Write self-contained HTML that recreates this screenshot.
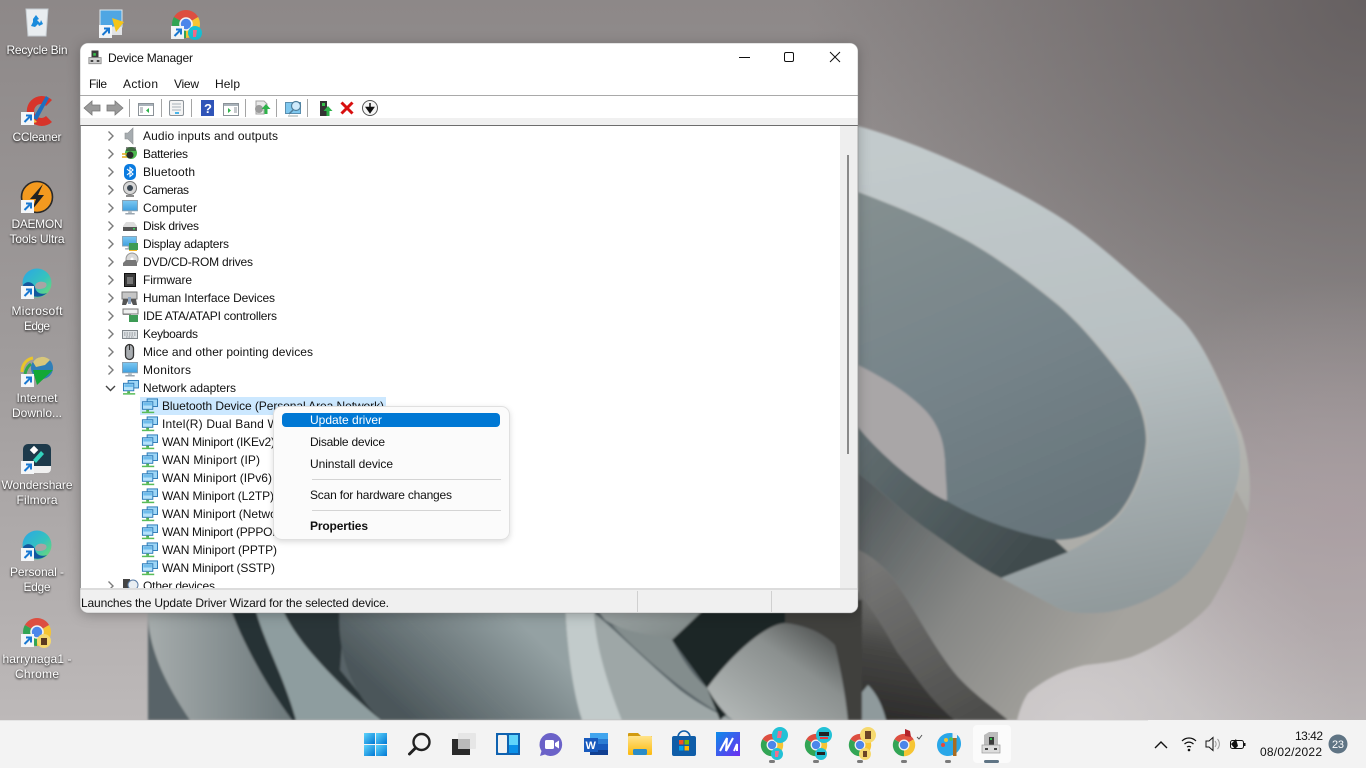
<!DOCTYPE html>
<html lang="en"><head><meta charset="utf-8"><title>Device Manager</title>
<style>
html,body{margin:0;padding:0;width:1366px;height:768px;overflow:hidden;background:#999}
svg{display:block;position:absolute;left:0;top:0}
text{font-family:"Liberation Sans",sans-serif;font-size:12px;fill:#111}
.d text{fill:#fff;text-anchor:middle}
.d{filter:drop-shadow(0 1px 1px #000)}
</style></head><body>
<svg width="1366" height="768" viewBox="0 0 1366 768" xmlns="http://www.w3.org/2000/svg">
<defs>
<linearGradient id="bgl" gradientUnits="userSpaceOnUse" x1="0" y1="0" x2="0" y2="720"><stop offset="0" stop-color="#8d8888"/><stop offset=".5" stop-color="#a09c9c"/><stop offset="1" stop-color="#bdb9b9"/></linearGradient>
<radialGradient id="dark" gradientUnits="userSpaceOnUse" cx="1366" cy="0" r="560"><stop offset="0" stop-color="#5f595a" stop-opacity=".85"/><stop offset="1" stop-color="#5f595a" stop-opacity="0"/></radialGradient>
<radialGradient id="light" gradientUnits="userSpaceOnUse" cx="1080" cy="730" r="270"><stop offset="0" stop-color="#d2cecf" stop-opacity=".9"/><stop offset="1" stop-color="#d2cecf" stop-opacity="0"/></radialGradient>
<radialGradient id="pink" gradientUnits="userSpaceOnUse" cx="1340" cy="520" r="240"><stop offset="0" stop-color="#ab9da2" stop-opacity=".75"/><stop offset="1" stop-color="#ab9da2" stop-opacity="0"/></radialGradient>
<linearGradient id="sil" gradientUnits="userSpaceOnUse" x1="1000" y1="130" x2="1100" y2="680"><stop offset="0" stop-color="#c3cacc"/><stop offset=".6" stop-color="#b5b6b2"/><stop offset="1" stop-color="#a19f9a"/></linearGradient>
<linearGradient id="lip" gradientUnits="userSpaceOnUse" x1="1000" y1="130" x2="1090" y2="610"><stop offset="0" stop-color="#c2cacc"/><stop offset=".5" stop-color="#b8c0c2"/><stop offset="1" stop-color="#919a9c"/></linearGradient>
<linearGradient id="bowl" gradientUnits="userSpaceOnUse" x1="900" y1="190" x2="1050" y2="540"><stop offset="0" stop-color="#848f90"/><stop offset=".5" stop-color="#76848a"/><stop offset="1" stop-color="#66747a"/></linearGradient>
<linearGradient id="band" gradientUnits="userSpaceOnUse" x1="860" y1="440" x2="1010" y2="570"><stop offset="0" stop-color="#616d70"/><stop offset="1" stop-color="#414c4e"/></linearGradient>
<linearGradient id="flow" gradientUnits="userSpaceOnUse" x1="870" y1="490" x2="1100" y2="650"><stop offset="0" stop-color="#555c5e"/><stop offset=".5" stop-color="#878886"/><stop offset="1" stop-color="#a5a39e"/></linearGradient>
<linearGradient id="f1" gradientUnits="userSpaceOnUse" x1="870" y1="560" x2="960" y2="720"><stop offset="0" stop-color="#777776"/><stop offset="1" stop-color="#4e4e4c"/></linearGradient>
<linearGradient id="f2" gradientUnits="userSpaceOnUse" x1="880" y1="600" x2="860" y2="720"><stop offset="0" stop-color="#6e6e6c"/><stop offset=".4" stop-color="#464644"/><stop offset="1" stop-color="#2b2a29"/></linearGradient>
<linearGradient id="big" gradientUnits="userSpaceOnUse" x1="410" y1="720" x2="510" y2="613"><stop offset="0" stop-color="#4b565a"/><stop offset="1" stop-color="#94a1a3"/></linearGradient>
<linearGradient id="sA" x1="0" y1="0" x2="1" y2="0"><stop offset="0" stop-color="#a9afaf"/><stop offset="1" stop-color="#6b777a"/></linearGradient>
<linearGradient id="sJ" x1="0" y1="1" x2="1" y2="0"><stop offset="0" stop-color="#b7bcbb"/><stop offset=".6" stop-color="#8b908f"/><stop offset="1" stop-color="#3c3e3d"/></linearGradient>
<linearGradient id="sH" x1="0" y1="0" x2="1" y2="1"><stop offset="0" stop-color="#a9b1b1"/><stop offset="1" stop-color="#77807f"/></linearGradient>
<linearGradient id="win" x1="0" y1="0" x2="1" y2="1"><stop offset="0" stop-color="#5fd4fb"/><stop offset="1" stop-color="#0078d4"/></linearGradient>
<linearGradient id="scr" x1="0" y1="0" x2="0" y2="1"><stop offset="0" stop-color="#7cc8f2"/><stop offset="1" stop-color="#3f9fdf"/></linearGradient>
<linearGradient id="folder" x1="0" y1="0" x2="0" y2="1"><stop offset="0" stop-color="#ffe38a"/><stop offset="1" stop-color="#fcb90c"/></linearGradient>
<linearGradient id="ma" x1="0" y1="0" x2="1" y2="1"><stop offset="0" stop-color="#0c8ce9"/><stop offset="1" stop-color="#6e2df0"/></linearGradient>
<linearGradient id="edge" x1="0" y1="0" x2="1" y2="1"><stop offset="0" stop-color="#2aa6e6"/><stop offset=".55" stop-color="#35c3bd"/><stop offset="1" stop-color="#7bdc66"/></linearGradient>
<filter id="soft" x="-5%" y="-5%" width="110%" height="110%"><feGaussianBlur stdDeviation="1.1"/></filter>
<filter id="menuS" x="-15%" y="-15%" width="130%" height="130%"><feDropShadow dx="0" dy="2" stdDeviation="3" flood-color="#000" flood-opacity=".14"/></filter>
<clipPath id="treeClip"><rect x="81" y="126" width="759" height="462"/></clipPath>
<clipPath id="winClip"><rect x="80" y="43" width="778" height="570" rx="8"/></clipPath>

<symbol id="chev" viewBox="0 0 8 12" overflow="visible"><path d="M1.5 1.5L6 6 1.5 10.5" fill="none" stroke="#7b7b7b" stroke-width="1.4"/></symbol>
<symbol id="net" viewBox="0 0 18 16"><rect x="6.5" y=".5" width="11" height="8" fill="#9ed6f6" stroke="#2a78b6"/><rect x="1.5" y="3.5" width="11" height="8" fill="#b5e2fb" stroke="#2a78b6"/><rect x="2.5" y="4.5" width="9" height="3" fill="#6fbdec"/><rect x="5.5" y="12" width="3" height="2" fill="#4eb04e"/><rect x="1" y="14" width="13" height="1.6" fill="#58bc58"/></symbol>
<symbol id="mon" viewBox="0 0 17 16"><rect x=".5" y=".5" width="16" height="11" fill="url(#scr)" stroke="#8aa0b0"/><rect x="6.5" y="12" width="4" height="2" fill="#b4bdc4"/><rect x="3.5" y="14" width="10" height="1.4" fill="#8d9aa5"/></symbol>
<symbol id="chrome" viewBox="0 0 30 30"><path d="M15 15L27.1 8A14 14 0 0 0 2.9 8Z" fill="#dd4e40"/><path d="M15 15L15 29A14 14 0 0 0 27.1 8Z" fill="#f6c533"/><path d="M15 15L2.9 8A14 14 0 0 0 15 29Z" fill="#32a555"/><circle cx="15" cy="15" r="6.8" fill="#f2f2f2"/><circle cx="15" cy="15" r="5.2" fill="#4c86ea"/></symbol>
<symbol id="edgei" viewBox="0 0 30 30"><circle cx="15" cy="15" r="14.5" fill="url(#edge)"/><path d="M1 17C3 27 16 33 25 25 19 27 14 25 13 19 11 14 5 12 1 17Z" fill="#14569e"/><path d="M13 19C13 14 19 12 24 15 26 19 22 21 17 21 15 21 13 20 13 19Z" fill="#a8a4a4"/></symbol>
<symbol id="sc" viewBox="0 0 13 13"><rect width="13" height="13" fill="#f4f6f8"/><path d="M3.5 10L9 4.5M5 3.5h5v5" fill="none" stroke="#1878d2" stroke-width="2"/></symbol>
<symbol id="dev" viewBox="0 0 16 16"><path d="M4 0h8v8H4z" fill="#3b3b3b"/><rect x="6" y="3" width="3" height="3" fill="#35c04a"/><path d="M1 8h14v7H1z" fill="#cfcfcf" stroke="#8c8c8c"/><rect x="3" y="11" width="3" height="2" fill="#333"/><rect x="10" y="11" width="3" height="2" fill="#333"/></symbol>
</defs>

<!-- wallpaper -->
<g>
<rect width="1366" height="768" fill="url(#bgl)"/>
<rect width="1366" height="768" fill="url(#dark)"/>
<rect width="1366" height="768" fill="url(#light)"/>
<rect width="1366" height="768" fill="url(#pink)"/>
<g filter="url(#soft)">
<path d="M148 100L858 126C930 146 1010 186 1058 216 1100 242 1158 298 1180 318 1206 344 1224 392 1241 432 1250 460 1252 490 1248 513 1244 540 1235 563 1211 603 1196 622 1160 646 1131 657 1110 663 1100 663 1085 665 1062 670 1044 680 1028 693 1022 702 1019 712 1017 720L190 720C168 688 148 650 148 613Z" fill="url(#sil)"/>
<path d="M858 128C930 146 1010 186 1058 216 1100 242 1158 298 1180 318 1206 344 1222 392 1236 432 1243 455 1240 475 1235 490 1228 515 1208 550 1191 570 1174 590 1130 612 1098 613 1080 614 1066 612 1058 608L1001 578 1065 553C1080 546 1100 535 1118 517 1133 500 1146 470 1148 441 1148 420 1140 395 1125 376 1100 346 1080 322 1058 303 1030 280 990 250 958 234 925 216 890 202 858 190Z" fill="url(#lip)"/>
<path d="M858 192C890 204 925 218 958 236 990 252 1030 282 1058 305 1080 324 1100 348 1123 378 1138 397 1146 420 1146 441 1144 470 1131 500 1116 516 1100 532 1080 540 1055 540 1030 538 1010 532 991 523L946 503 945 459 931 418 901 395 858 365Z" fill="url(#bowl)"/>
<path d="M858 365C880 376 905 390 925 410 940 426 945 445 945 465 946 480 947 490 947 501 925 492 880 455 858 427Z" fill="#a9a6a7"/>
<path d="M858 427C880 455 925 492 947 501 970 515 1010 532 1055 540L1068 552 1001 578C975 565 950 545 925 528 900 510 880 490 858 473Z" fill="url(#band)"/>
<path d="M858 473C880 490 900 510 925 528 950 545 975 565 1001 578L1058 608C1066 612 1080 614 1098 613 1130 612 1174 590 1191 570 1208 550 1228 515 1236 490L1248 513C1244 540 1235 563 1211 603 1196 622 1160 646 1131 657 1110 663 1100 663 1085 665 1062 670 1044 680 1028 693 1022 702 1019 712 1017 720L1008 720C990 705 975 695 958 677 935 650 915 610 901 590 890 572 875 558 858 550Z" fill="url(#flow)"/>
<path d="M858 550C875 558 890 572 901 590 915 610 935 650 958 677 975 695 990 705 1008 720L955 720C930 700 915 675 898 653 890 640 875 610 858 592Z" fill="url(#f1)"/>
<path d="M858 592C875 610 890 640 898 653 915 675 930 700 955 720L780 720 780 590Z" fill="url(#f2)"/>
<path d="M868 685C878 695 883 708 886 720H858V697Z" fill="#8f9a9c"/>
<!-- lower fan below the window -->
<rect x="148" y="600" width="640" height="120" fill="#596467"/>
<path d="M140 600H230C238 630 262 685 294 720H190C168 688 148 650 148 613Z" fill="url(#sA)"/>
<path d="M228 600H258C262 630 280 670 296 720H292C266 685 238 635 228 600Z" fill="#263034"/>
<path d="M253 600H282C288 630 330 680 381 720H296C286 680 262 640 253 600Z" fill="#8e9d9f"/>
<path d="M279 600H345L340 670 381 720C335 680 292 640 279 600Z" fill="#2a3437"/>
<path d="M340 600H565C566 640 572 690 582 720H381C355 695 335 660 340 600Z" fill="url(#big)"/>
<path d="M565 600H594C596 650 610 690 622 720H582C572 690 566 640 565 600Z" fill="#c2cbcb"/>
<path d="M590 600H714L707 640 672 640C650 640 625 632 605 620Z" fill="url(#sH)"/>
<path d="M594 613C610 625 650 665 680 690 700 705 720 715 733 720H622C610 690 596 650 594 613Z" fill="#9ea7a7"/>
<path d="M612 625C640 635 660 636 672 640 682 660 695 678 707 688L733 720C700 705 650 665 612 625Z" fill="#838d8d"/>
<path d="M672 640L714 600H790V660L720 720 707 688Z" fill="#1d2526"/>
<path d="M707 688C735 650 768 623 786 623 805 625 822 632 835 645 842 675 846 700 848 720H733C722 712 714 700 707 688Z" fill="url(#sJ)"/>
<path d="M785 600H862V720H848C846 700 842 672 835 645 822 632 805 625 785 623Z" fill="#3f3f3d"/>
</g>
</g>

<!-- desktop icons -->
<g id="desktop">
<path d="M26 9h22l-2 27H28Z" fill="#e9edf0" stroke="#c5ccd1"/><path d="M33 19l3-4 3 4-2 1 3 3 1-3 2 4-4 2-1-2-3 3-4-1 2-4Z" fill="#1a8bdc"/>
<rect x="100" y="10" width="22" height="17" fill="#4fa6e3" stroke="#dfe6ea"/><rect x="104" y="27" width="18" height="8" fill="#e2e4e6"/><path d="M112 18l12 4-8 10Z" fill="#f5c518"/><use href="#sc" x="99" y="25" width="13" height="13"/>
<use href="#chrome" x="171" y="9" width="30" height="30"/><use href="#sc" x="171" y="26" width="13" height="13"/><circle cx="195" cy="33" r="7" fill="#17c0d4"/><path d="M193 30h4l-1 7h-3Z" fill="#f06a8a"/>

<path d="M52 100A15 15 0 1 0 52 122L46 116A7 7 0 1 1 46 106Z" fill="#d8342a"/><path d="M33 118L46 96l3 2-12 22Z" fill="#1f6fc0"/><path d="M27 112l10 10-7 2Z" fill="#f2c14a"/><use href="#sc" x="21" y="112" width="13" height="13"/>
<circle cx="37" cy="197" r="15.5" fill="#f49a1f" stroke="#2a2a2a" stroke-width="1.6"/><path d="M43 184L30 199h6l-4 11 12-15h-6Z" fill="#222"/><use href="#sc" x="21" y="200" width="13" height="13"/>
<use href="#edgei" x="21" y="268" width="32" height="30"/><use href="#sc" x="21" y="286" width="13" height="13"/>
<path d="M22 372c0-8 5-13 11-14" stroke="#e9c52a" stroke-width="3" fill="none"/><path d="M25 374c1-5 3-8 6-10" stroke="#2fa84a" stroke-width="3" fill="none"/><circle cx="42" cy="368" r="11" fill="#2f7fb8"/><path d="M33 362a11 11 0 0 1 17-2l-5 5-9 2Z" fill="#d8c77b"/><path d="M33 370h20l-16 15-2-7Z" fill="#14a836"/><use href="#sc" x="21" y="374" width="13" height="13"/>
<rect x="23" y="444" width="28" height="29" rx="5" fill="#1d3a4b"/><path d="M33 460l8-9 3 3-8 9Z" fill="#33d3be"/><rect x="31" y="447" width="6" height="6" fill="#fff" transform="rotate(45 34 450)"/><path d="M27 466h24v3a4 4 0 0 1-4 4H27Z" fill="#f0f0f0"/><use href="#sc" x="21" y="461" width="13" height="13"/>
<use href="#edgei" x="21" y="530" width="32" height="30"/><use href="#sc" x="21" y="548" width="13" height="13"/>
<use href="#chrome" x="22" y="617" width="30" height="30"/><circle cx="44" cy="641" r="7" fill="#f6d96e"/><path d="M41 638h6v7h-6Z" fill="#5b3a21"/><use href="#sc" x="21" y="634" width="13" height="13"/>

<g class="d">
<text x="37" y="54" textLength="61">Recycle Bin</text>
<text x="37" y="141" textLength="49">CCleaner</text>
<text x="37" y="228" textLength="51">DAEMON</text><text x="37" y="243" textLength="55">Tools Ultra</text>
<text x="37" y="315" textLength="51">Microsoft</text><text x="37" y="330" textLength="26">Edge</text>
<text x="37" y="402" textLength="41">Internet</text><text x="37" y="417" textLength="50">Downlo...</text>
<text x="37" y="489" textLength="71">Wondershare</text><text x="37" y="504" textLength="41">Filmora</text>
<text x="37" y="576" textLength="54">Personal -</text><text x="37" y="591" textLength="27">Edge</text>
<text x="37" y="663" textLength="69">harrynaga1 -</text><text x="37" y="678" textLength="44">Chrome</text>
</g>
</g>

<!-- window -->
<g style="filter:drop-shadow(0 2px 6px rgba(0,0,0,.25))"><rect x="80" y="43" width="778" height="570" rx="8" fill="#fff"/></g>
<g clip-path="url(#winClip)">
<use href="#dev" x="88" y="50" width="14" height="15"/>
<text x="108" y="62" textLength="85">Device Manager</text>
<path d="M739 57.500h11" stroke="#111" stroke-width="1"/>
<rect x="784.500" y="52.500" width="9" height="9" rx="1.500" fill="none" stroke="#111"/>
<path d="M830 52l10 10M840 52l-10 10" stroke="#111" stroke-width="1"/>
<text x="89" y="88" textLength="18">File</text><text x="123" y="88" textLength="35">Action</text><text x="174" y="88" textLength="25">View</text><text x="215" y="88" textLength="25">Help</text>
<rect x="80" y="95" width="778" height="1" fill="#a9a9a9"/>
<!-- toolbar -->
<path d="M84 108l8-7v4h8v6h-8v4Z" fill="#9a9a9a" stroke="#777" stroke-width=".8"/>
<path d="M123 108l-8-7v4h-8v6h8v4Z" fill="#9a9a9a" stroke="#777" stroke-width=".8"/>
<g fill="#a5a5a5"><rect x="129" y="99" width="1" height="18"/><rect x="161" y="99" width="1" height="18"/><rect x="191" y="99" width="1" height="18"/><rect x="245" y="99" width="1" height="18"/><rect x="276" y="99" width="1" height="18"/><rect x="307" y="99" width="1" height="18"/></g>
<rect x="138.500" y="103.500" width="15" height="12" fill="#fff" stroke="#8b9298"/><rect x="139" y="104" width="14" height="2" fill="#a9b2ba"/><path d="M149 108v5l-3-2.500Z" fill="#2eb34a"/><path d="M140 108h3M140 110h3M140 112h3" stroke="#8b9298"/>
<rect x="169.500" y="100.500" width="14" height="15" rx="1.500" fill="#f4f4f4" stroke="#8b9298"/><path d="M172 104h9M172 107h9M172 110h9" stroke="#a9b2ba"/><rect x="175" y="112" width="4" height="2" fill="#4ab5ea"/>
<rect x="201" y="100" width="13" height="16" fill="#2f54b8"/><text x="204" y="113" style="font-size:13px;font-weight:bold;fill:#fff">?</text>
<rect x="223.500" y="103.500" width="15" height="12" fill="#fff" stroke="#8b9298"/><rect x="224" y="104" width="14" height="2" fill="#a9b2ba"/><path d="M228 108v5l3-2.500Z" fill="#2eb34a"/><path d="M234 108h3M234 110h3M234 112h3" stroke="#8b9298"/>
<path d="M256 101h8l3 3v5h-3v5h-8Z" fill="#e8e8e8" stroke="#a3a3a3"/><circle cx="259" cy="109" r="4" fill="#9b9b9b"/><path d="M266 104l4.500 5h-3v5h-3v-5h-3Z" fill="#2eb34a"/>
<rect x="285.500" y="102.500" width="15" height="11" fill="#7fc8ef" stroke="#5a8fb0"/><path d="M288 116h10" stroke="#9aa"/><circle cx="296" cy="106" r="4.500" fill="#cfeafb" stroke="#4f7f9c" stroke-width="1.200"/><path d="M293 110l-4 4" stroke="#4f7f9c" stroke-width="1.500"/>
<rect x="320" y="101" width="7" height="15" fill="#333"/><rect x="322" y="103" width="3" height="3" fill="#35c04a"/><path d="M328 106l4.500 5h-3v5h-3v-5h-3Z" fill="#2eb34a"/>
<path d="M341.500 102.500l11 11M352.500 102.500l-11 11" stroke="#d80f0f" stroke-width="3"/>
<circle cx="370" cy="108" r="7.500" fill="#f6f6f6" stroke="#555"/><path d="M370 103v5M366.500 107.500h7L370 112.500Z" stroke="#111" fill="#111" stroke-width="1.500"/>
<rect x="80" y="118" width="778" height="7" fill="#f0f0f0"/>
<rect x="80" y="125" width="778" height="1" fill="#6d6d6d"/>
<rect x="80" y="126" width="1" height="463" fill="#9a9a9a"/>
<rect x="840" y="126" width="18" height="463" fill="#eeeeee"/>
<rect x="847" y="155" width="2" height="299" fill="#8a8a8a"/>
<rect x="857" y="126" width="1" height="463" fill="#dcdcdc"/>

<!-- tree -->
<g clip-path="url(#treeClip)">
<rect x="140" y="397" width="246" height="18" fill="#cce8ff"/>
<use href="#chev" x="107" y="130" width="8" height="12"/><use href="#chev" x="107" y="148" width="8" height="12"/><use href="#chev" x="107" y="166" width="8" height="12"/><use href="#chev" x="107" y="184" width="8" height="12"/><use href="#chev" x="107" y="202" width="8" height="12"/><use href="#chev" x="107" y="220" width="8" height="12"/><use href="#chev" x="107" y="238" width="8" height="12"/><use href="#chev" x="107" y="256" width="8" height="12"/><use href="#chev" x="107" y="274" width="8" height="12"/><use href="#chev" x="107" y="292" width="8" height="12"/><use href="#chev" x="107" y="310" width="8" height="12"/><use href="#chev" x="107" y="328" width="8" height="12"/><use href="#chev" x="107" y="346" width="8" height="12"/><use href="#chev" x="107" y="364" width="8" height="12"/><use href="#chev" x="107" y="580" width="8" height="12"/>
<path d="M106 386l4.500 4.500 4.500-4.500" fill="none" stroke="#444" stroke-width="1.400"/>

<path d="M125 133h3l5-5v16l-5-5h-3Z" fill="#a6acb0" stroke="#8b8f92" stroke-width=".6"/>
<circle cx="131" cy="153" r="6" fill="#4db84f"/><path d="M126 147h10v4h-10Z" fill="#333" opacity=".6"/><path d="M122 154h5M122 157h5" stroke="#e6a91c" stroke-width="1.500"/><circle cx="130" cy="155" r="3.500" fill="#2a2a2a"/>
<rect x="124" y="164" width="12" height="16" rx="5" fill="#0a7be0"/><path d="M127 169l6 5-3 2.500v-9l3 2.500-6 5" fill="none" stroke="#fff" stroke-width="1.100"/>
<circle cx="130" cy="188" r="6.500" fill="#d7d7d7" stroke="#777"/><circle cx="130" cy="188" r="3" fill="#3a4652"/><path d="M126 196h8" stroke="#666" stroke-width="1.500"/>
<use href="#mon" x="122" y="200" width="16" height="15"/>
<path d="M123 226l3-4h8l3 4v4h-14Z" fill="#dcdcdc"/><rect x="123" y="227" width="14" height="4" fill="#555"/><rect x="133" y="228" width="2" height="1.500" fill="#3fd05a"/>
<use href="#mon" x="122" y="236" width="15" height="14"/><rect x="129" y="243" width="9" height="7" fill="#3d9b55"/><rect x="129" y="250" width="8" height="1" fill="#f0b429"/>
<circle cx="132" cy="259" r="6" fill="#d8d8d8" stroke="#999"/><circle cx="132" cy="259" r="1.500" fill="#fff"/><path d="M123 263l3-3h10l1 3v3h-14Z" fill="#777"/>
<rect x="124.500" y="273.500" width="11" height="13" fill="#3c3c3c" stroke="#111"/><rect x="127" y="277" width="6" height="7" fill="#777"/>
<rect x="122" y="292" width="15" height="7" fill="#c6c6c6" stroke="#777"/><path d="M123 299l-1 6h4l2-4h3l2 4h4l-1-6Z" fill="#555"/><rect x="128" y="297" width="3" height="7" fill="#8fa5c0"/>
<path d="M123 309h15v5h-15Z" fill="#eee" stroke="#777"/><rect x="123" y="314" width="8" height="1" fill="#888"/><rect x="129" y="315" width="9" height="7" fill="#3d9b55"/>
<rect x="122.500" y="330.500" width="15" height="8" fill="#dfe3e6" stroke="#80868b"/><path d="M124 333h12M124 335h12M126 337h8" stroke="#8b9197" stroke-dasharray="1.500 1"/>
<rect x="125.500" y="344.500" width="8" height="15" rx="4" fill="#a8acb0" stroke="#333" stroke-width="1.300"/><path d="M129.500 345v5" stroke="#333"/>
<use href="#mon" x="122" y="362" width="16" height="15"/>
<use href="#net" x="122" y="380" width="17" height="15"/>
<rect x="123" y="579" width="7" height="13" fill="#444"/><circle cx="133" cy="585" r="5" fill="#e9eef2" stroke="#5a7ca5"/>

<use href="#net" x="141" y="398" width="17" height="16"/><use href="#net" x="141" y="416" width="17" height="16"/><use href="#net" x="141" y="434" width="17" height="16"/><use href="#net" x="141" y="452" width="17" height="16"/><use href="#net" x="141" y="470" width="17" height="16"/><use href="#net" x="141" y="488" width="17" height="16"/><use href="#net" x="141" y="506" width="17" height="16"/><use href="#net" x="141" y="524" width="17" height="16"/><use href="#net" x="141" y="542" width="17" height="16"/><use href="#net" x="141" y="560" width="17" height="16"/>

<text x="143" y="140" textLength="135">Audio inputs and outputs</text>
<text x="143" y="158" textLength="45">Batteries</text>
<text x="143" y="176" textLength="52">Bluetooth</text>
<text x="143" y="194" textLength="46">Cameras</text>
<text x="143" y="212" textLength="54">Computer</text>
<text x="143" y="230" textLength="56">Disk drives</text>
<text x="143" y="248" textLength="86">Display adapters</text>
<text x="143" y="266" textLength="110">DVD/CD-ROM drives</text>
<text x="143" y="284" textLength="49">Firmware</text>
<text x="143" y="302" textLength="132">Human Interface Devices</text>
<text x="143" y="320" textLength="134">IDE ATA/ATAPI controllers</text>
<text x="143" y="338" textLength="55">Keyboards</text>
<text x="143" y="356" textLength="170">Mice and other pointing devices</text>
<text x="143" y="374" textLength="48">Monitors</text>
<text x="143" y="392" textLength="93">Network adapters</text>
<text x="162" y="410" textLength="222">Bluetooth Device (Personal Area Network)</text>
<text x="162" y="428" textLength="205">Intel(R) Dual Band Wireless-AC 3168</text>
<text x="162" y="446" textLength="113">WAN Miniport (IKEv2)</text>
<text x="162" y="464" textLength="98">WAN Miniport (IP)</text>
<text x="162" y="482" textLength="110">WAN Miniport (IPv6)</text>
<text x="162" y="500" textLength="112">WAN Miniport (L2TP)</text>
<text x="162" y="518" textLength="172">WAN Miniport (Network Monitor)</text>
<text x="162" y="536" textLength="122">WAN Miniport (PPPOE)</text>
<text x="162" y="554" textLength="115">WAN Miniport (PPTP)</text>
<text x="162" y="572" textLength="113">WAN Miniport (SSTP)</text>
<text x="143" y="590" textLength="72">Other devices</text>
</g>

<!-- status bar -->
<rect x="80" y="588" width="778" height="2" fill="#dcdcdc"/>
<rect x="80" y="590" width="778" height="23" fill="#f0f0f0"/>
<rect x="637" y="591" width="1" height="21" fill="#d0d0d0"/><rect x="771" y="591" width="1" height="21" fill="#d0d0d0"/>
<text x="81" y="607" textLength="308">Launches the Update Driver Wizard for the selected device.</text>
</g>
<rect x="80" y="43" width="778" height="570" rx="8" fill="none" stroke="#8a8a8a" stroke-opacity=".45"/>

<!-- context menu -->
<rect x="273.500" y="406.500" width="236" height="133" rx="8" fill="#fbfbfb" stroke="#e0e0e0" filter="url(#menuS)"/>
<rect x="282" y="413" width="218" height="14" rx="4" fill="#0078d4"/>
<text x="310" y="424" textLength="72" style="fill:#fff">Update driver</text>
<text x="310" y="446" textLength="75">Disable device</text>
<text x="310" y="468" textLength="83">Uninstall device</text>
<rect x="312" y="479" width="189" height="1" fill="#d4d4d4"/>
<text x="310" y="499" textLength="142">Scan for hardware changes</text>
<rect x="312" y="510" width="189" height="1" fill="#d4d4d4"/>
<text x="310" y="530" textLength="58" style="font-weight:bold">Properties</text>

<!-- taskbar -->
<rect y="720" width="1366" height="48" fill="#f3f3f3"/>
<rect y="720" width="1148" height="1" fill="#e4e4e4"/>
<g fill="url(#win)"><rect x="364" y="733" width="11" height="11"/><rect x="376" y="733" width="11" height="11"/><rect x="364" y="745" width="11" height="11"/><rect x="376" y="745" width="11" height="11"/></g>
<circle cx="421.500" cy="742" r="8" fill="none" stroke="#222" stroke-width="2.400"/><path d="M415.500 748l-6 6" stroke="#222" stroke-width="3" stroke-linecap="round"/>
<rect x="452" y="739" width="18" height="16" fill="#2a2a2a"/><rect x="458" y="733" width="18" height="16" rx="1" fill="#e6e6e6"/><rect x="458" y="739" width="12" height="10" fill="#b9b9b9"/>
<rect x="496" y="733" width="24" height="22" fill="#0f62b0"/><rect x="498" y="735" width="9" height="18" rx="1" fill="#f2f2f2"/><rect x="509" y="735" width="9" height="10" fill="#5fd4fb"/><rect x="509" y="745" width="9" height="8" fill="#0a90e8"/>
<path d="M551 733a11.500 11.500 0 1 1-6 21.500l-5 1.500 1.500-5A11.500 11.500 0 0 1 551 733Z" fill="#6b62c8"/><rect x="545" y="740" width="9" height="9" rx="1.500" fill="#fff"/><path d="M555 743l4-2.500v8l-4-2.500Z" fill="#fff"/>
<rect x="590" y="733" width="18" height="6" fill="#41a5ee"/><rect x="590" y="739" width="18" height="5" fill="#2b7cd3"/><rect x="590" y="744" width="18" height="6" fill="#185abd"/><rect x="590" y="750" width="18" height="5" fill="#103f91"/><rect x="584" y="738" width="14" height="14" fill="#185abd"/><text x="585.500" y="749" style="font-size:11px;font-weight:bold;fill:#fff">W</text>
<path d="M628 734a1 1 0 0 1 1-1h9l3 3h11v5h-24Z" fill="#d19a10"/><rect x="628" y="736" width="24" height="19" rx="1" fill="url(#folder)"/><rect x="633" y="749" width="14" height="6" rx="1.500" fill="#2a8cc8"/>
<path d="M678 737a6 6 0 0 1 12 0" fill="none" stroke="#0f5da8" stroke-width="1.600"/><rect x="672" y="736" width="24" height="20" rx="2" fill="#0f5da8"/><rect x="679" y="740" width="4.500" height="4.500" fill="#f25022"/><rect x="684.500" y="740" width="4.500" height="4.500" fill="#7fba00"/><rect x="679" y="746" width="4.500" height="4.500" fill="#00a4ef"/><rect x="684.500" y="746" width="4.500" height="4.500" fill="#ffb900"/>
<rect x="716" y="732" width="24" height="24" fill="url(#ma)"/><path d="M720 751l7-13 -1 13 7-13M734 751l3-7 0 7" fill="none" stroke="#fff" stroke-width="2"/>

<use href="#chrome" x="760" y="733" width="24" height="24"/><circle cx="780" cy="735" r="8" fill="#22c1d6"/><path d="M778 731h4l-1 7h-4Z" fill="#ef6f8e"/><circle cx="777" cy="754" r="6" fill="#22c1d6"/><path d="M775 751h4l-1 6h-3Z" fill="#ef6f8e"/>
<use href="#chrome" x="804" y="733" width="24" height="24"/><circle cx="824" cy="735" r="8" fill="#22c1d6"/><path d="M819 732h10v4h-10Z" fill="#222"/><path d="M820 737h8v2h-8Z" fill="#e83a3a"/><circle cx="821" cy="754" r="6" fill="#22c1d6"/><path d="M817 752h8v3h-8Z" fill="#222"/>
<use href="#chrome" x="848" y="733" width="24" height="24"/><circle cx="868" cy="735" r="8" fill="#f6d96e"/><path d="M865 731h6v8h-6Z" fill="#6b4526"/><circle cx="865" cy="754" r="6" fill="#f6d96e"/><path d="M863 751h4v6h-4Z" fill="#6b4526"/>
<use href="#chrome" x="892" y="733" width="24" height="24"/><path d="M905 729l5 2 1 6-6-1Z" fill="#b2232a"/><path d="M917 737l2 2 3-4" stroke="#555" fill="none"/>
<path d="M950 733c8 0 11 5 11 11s-6 12-13 12-11-5-11-11 5-12 13-12Z" fill="#2aa7e8"/><circle cx="943" cy="745" r="2" fill="#e8483a"/><circle cx="946" cy="740" r="2" fill="#f2c233"/><circle cx="951" cy="739" r="1.800" fill="#4fc34f"/><rect x="953" y="738" width="3.500" height="18" fill="#a96c22"/><rect x="952.500" y="733" width="4.500" height="5" fill="#eee"/>
<rect x="973" y="725" width="38" height="38" rx="4" fill="#fbfbfb"/>
<path d="M984 735l5-3h9v14h-14Z" fill="#bcbcbc"/><rect x="989" y="737" width="5" height="8" fill="#3a3a3a"/><rect x="990" y="738" width="2" height="2" fill="#35c04a"/><rect x="982" y="745" width="18" height="8" fill="#dcdcdc" stroke="#9a9a9a" stroke-width=".7"/><rect x="985" y="748" width="3" height="2" fill="#444"/><rect x="994" y="748" width="3" height="2" fill="#444"/>
<g fill="#7a7a7a"><rect x="769" y="760" width="6" height="3" rx="1.500"/><rect x="813" y="760" width="6" height="3" rx="1.500"/><rect x="857" y="760" width="6" height="3" rx="1.500"/><rect x="901" y="760" width="6" height="3" rx="1.500"/><rect x="945" y="760" width="6" height="3" rx="1.500"/></g>
<rect x="984" y="760" width="15" height="3" rx="1.500" fill="#5f7484"/>

<path d="M1155 748l6-6 6 6" fill="none" stroke="#111" stroke-width="1.400"/>
<path d="M1182 741c4-4 10-4 14 0M1184.500 744c3-2.500 6-2.500 9 0M1187 747c1.500-1 2.500-1 4 0" fill="none" stroke="#111" stroke-width="1.200"/><circle cx="1189" cy="750" r="1.300" fill="#111"/>
<path d="M1206 741h3l4-3.500v13l-4-3.500h-3Z" fill="none" stroke="#111"/><path d="M1215 741c1.500 2 1.500 4 0 6M1217.500 739c2.500 3 2.500 7 0 10" fill="none" stroke="#999"/>
<rect x="1230.500" y="740.500" width="13" height="8" rx="2" fill="none" stroke="#111"/><path d="M1236 739l-5 5 4 5 3-3Z" fill="#111"/><rect x="1244" y="743" width="1.500" height="3" fill="#111"/>
<text x="1295" y="740" textLength="28">13:42</text>
<text x="1260" y="756" textLength="62">08/02/2022</text>
<circle cx="1338" cy="744" r="9.500" fill="#5f7484"/><text x="1332" y="748" textLength="12" style="fill:#fff;font-size:11px">23</text>
</svg>
</body></html>
